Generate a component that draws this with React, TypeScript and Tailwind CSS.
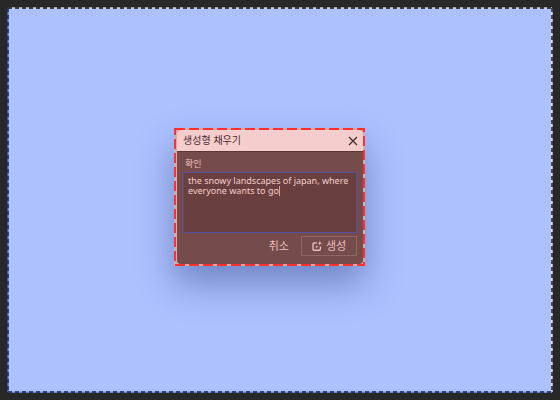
import { useState } from "react";

function MarchingAnts() {
  return (
    <svg className="pointer-events-none absolute inset-0 size-full overflow-visible" strokeWidth="1.4" aria-hidden="true">
      <line x1="0" y1="0" x2="100%" y2="0" stroke="#d0d3d8" />
      <line x1="100%" y1="0" x2="100%" y2="100%" stroke="#eceee8" />
      <line x1="0" y1="100%" x2="100%" y2="100%" stroke="#8fa6ee" />
      <line x1="0" y1="0" x2="0" y2="100%" stroke="#5675cf" />
      <g strokeDasharray="4 3">
        <line x1="0" y1="0" x2="100%" y2="0" stroke="#0c0f14" />
        <line x1="100%" y1="0" x2="100%" y2="100%" stroke="#0c0f14" />
        <line x1="0" y1="100%" x2="100%" y2="100%" stroke="#14235c" />
        <line x1="0" y1="0" x2="0" y2="100%" stroke="#14235c" />
      </g>
    </svg>
  );
}

function HighlightFrame() {
  return (
    <div className="pointer-events-none absolute inset-px">
      <svg className="size-full overflow-visible" fill="none" aria-hidden="true">
        <rect width="100%" height="100%" stroke="#ff3030" strokeWidth="2" strokeDasharray="10 4" />
      </svg>
    </div>
  );
}

function GenerateIcon() {
  return (
    <svg className="size-2.5" viewBox="0 0 10 10" fill="none" stroke="currentColor" strokeWidth="1.4" aria-hidden="true">
      <path d="M4.800 2H2.200A1.200 1.200 0 0 0 1 3.200V8a1.200 1.200 0 0 0 1.200 1.200h5A1.200 1.200 0 0 0 8.400 8V5.500" />
      <path d="M7.800 0 8.400 1.600 10 2.200 8.400 2.800 7.800 4.400 7.200 2.800 5.600 2.200 7.200 1.600Z" fill="currentColor" stroke="none" />
      <path d="M4 6.400 5.500 4.900" />
    </svg>
  );
}

function FillDialog() {
  const [prompt, setPrompt] = useState("the snowy landscapes of japan, where everyone wants to go");

  return (
    <section
      role="dialog"
      aria-labelledby="dialog-title"
      className="relative w-[191px] bg-[#d7a9ad] p-0.5 pl-[3px] shadow-[0_18px_34px_0_rgba(25,45,110,0.4)]"
    >
      <form className="overflow-hidden rounded bg-[#754c4b] text-[#e9bdbd]" onSubmit={(e) => e.preventDefault()}>
        <header className="flex h-[22px] items-center justify-between border-b border-[#5c3535] bg-[#f5cdcd] pl-1.5 pr-[5px] text-[#4a2929]">
          <h1 id="dialog-title" className="text-[10px] leading-4">
            생성형 채우기
          </h1>
          <button type="button" aria-label="닫기">
            <svg className="size-2.5" viewBox="0 0 10 10" stroke="currentColor" strokeWidth="1.2" aria-hidden="true">
              <path d="M1 1 9 9M9 1 1 9" />
            </svg>
          </button>
        </header>
        <div className="px-1.5 pt-1 pb-2">
          <label htmlFor="prompt" className="block pl-0.5 text-[9px] leading-4">
            확인
          </label>
          <div className="relative">
            <textarea
              id="prompt"
              value={prompt}
              onChange={(e) => setPrompt(e.target.value)}
              className="block h-[61px] w-full resize-none overflow-hidden border border-[#5650a0] bg-[#693f3f] px-1 py-[3px] font-['Noto_Sans','Noto_Sans_CJK_KR',sans-serif] text-[9px] leading-[10px] text-[#f6cccc] outline-none"
            />
            <span className="pointer-events-none absolute top-3.5 left-24 h-2.5 w-px bg-[#d3a5a5]" />
          </div>
          <div className="mt-[3px] flex justify-end gap-3">
            <button type="button" className="text-[11px]">
              취소
            </button>
            <button type="submit" className="flex h-5 w-14 items-center justify-center gap-1 border border-[#926565] text-[11px]">
              <GenerateIcon />
              생성
            </button>
          </div>
        </div>
      </form>
      <HighlightFrame />
    </section>
  );
}

export default function App() {
  return (
    <main className="flex min-h-screen bg-[#282828] p-2 font-['Liberation_Sans','Noto_Sans_CJK_KR',sans-serif]">
      <div className="relative flex flex-1 items-center justify-center bg-[#adc1ff] pr-[21px] pb-1.5">
        <FillDialog />
        <MarchingAnts />
      </div>
    </main>
  );
}
